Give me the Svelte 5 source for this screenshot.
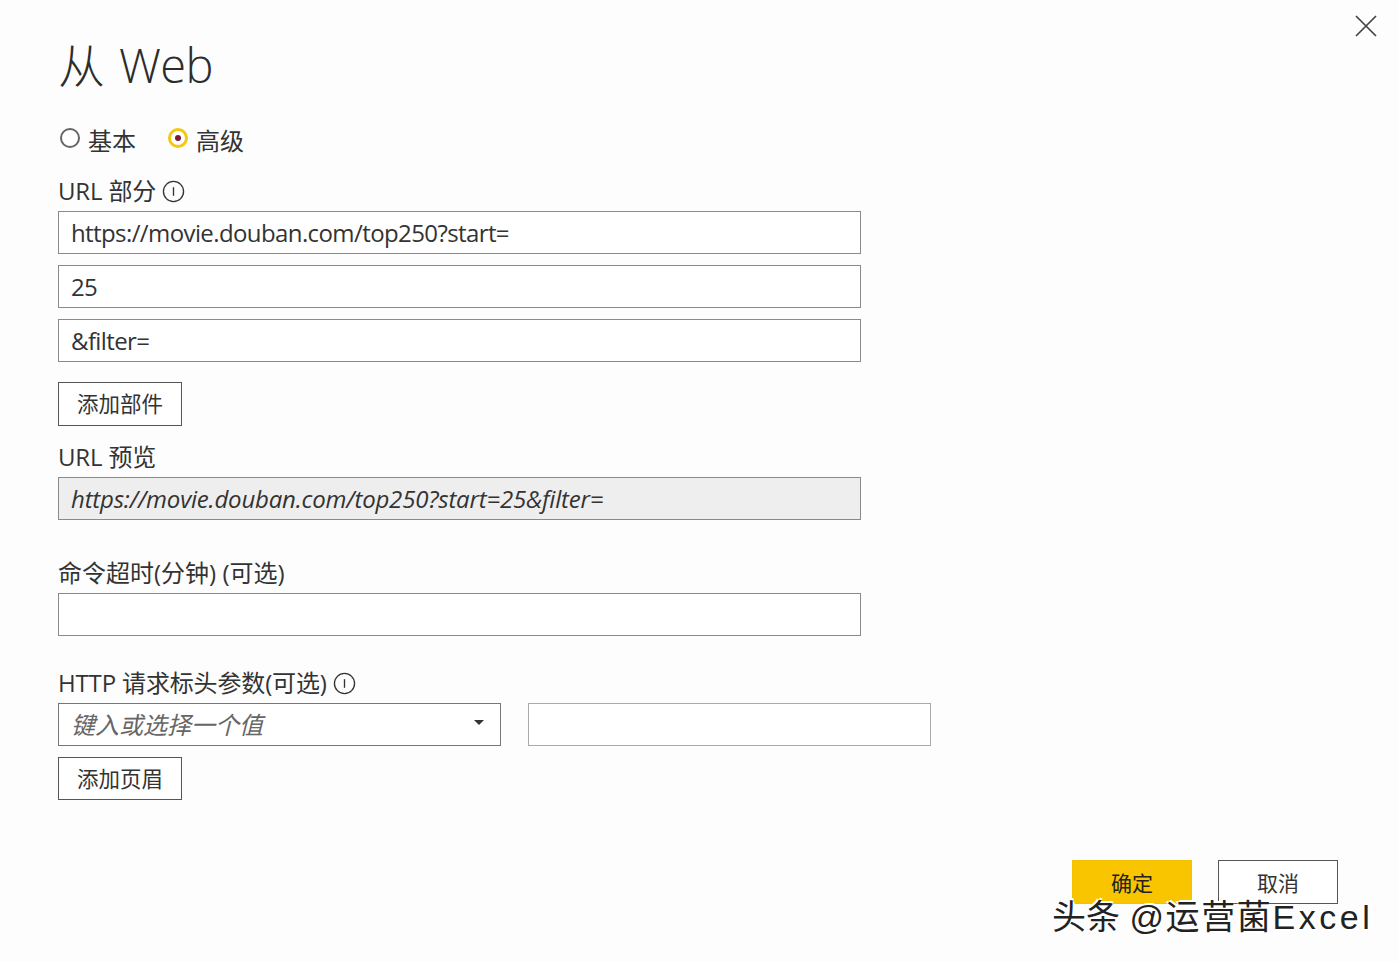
<script lang="ts">
	const urlParts = ['https://movie.douban.com/top250?start=', '25', '&filter='];
	const preview = urlParts.join('');
</script>

{#snippet info()}
	<svg class="info" viewBox="0 0 24 24" width="23" height="23" aria-hidden="true">
		<circle cx="12" cy="12" r="10.5" fill="none" stroke="#333" stroke-width="1.4" />
		<path d="M12 7.5v9" stroke="#333" stroke-width="1.4" />
	</svg>
{/snippet}

<div class="dialog">
	<button class="close" aria-label="关闭">
		<svg viewBox="0 0 24 24" width="24" height="24">
			<path d="M2 2l20 20M22 2L2 22" stroke="#444" stroke-width="1.7" fill="none" />
		</svg>
	</button>

	<h1>从 Web</h1>

	<div class="radios">
		<label class="radio"><span class="dot"></span>基本</label>
		<label class="radio"><span class="dot on"></span>高级</label>
	</div>

	<div class="label first">URL 部分 {@render info()}</div>
	<div class="parts">
		{#each urlParts as part}
			<div class="field">{part}</div>
		{/each}
	</div>
	<div class="btn add">添加部件</div>

	<div class="label preview-label">URL 预览</div>
	<div class="field preview">{preview}</div>

	<div class="label timeout-label">命令超时(分钟) (可选)</div>
	<div class="field"></div>

	<div class="label http-label">HTTP 请求标头参数(可选) {@render info()}</div>
	<div class="headers">
		<div class="field combo">
			<span class="placeholder">键入或选择一个值</span>
			<span class="caret"></span>
		</div>
		<div class="field value"></div>
	</div>
	<div class="btn add-header">添加页眉</div>

	<div class="footer">
		<div class="btn action primary">确定</div>
		<div class="btn action">取消</div>
	</div>

	<div class="watermark">头条 <span class="handle">@运营菌</span><span class="brand">Excel</span></div>
</div>

<style>
	:global(body) {
		margin: 0;
		background: #fdfdfe;
	}

	.dialog {
		position: relative;
		box-sizing: border-box;
		width: 1398px;
		height: 962px;
		padding: 32px 0 0 58px;
		overflow: hidden;
		color: #333;
		font-family: "Open Sans", "Noto Sans CJK SC", sans-serif;
		font-size: 24px;
	}

	.close {
		position: absolute;
		top: 14px;
		right: 20px;
		padding: 0;
		border: none;
		background: none;
	}

	h1 {
		margin: 0;
		height: 66px;
		font-size: 47px;
		font-weight: 300;
		line-height: 66px;
		letter-spacing: -0.6px;
		word-spacing: 3px;
		color: #2c2c2c;
	}

	.radios {
		display: flex;
		gap: 32px;
		margin-top: 26px;
		margin-left: 2px;
		height: 34px;
	}

	.radio {
		display: flex;
		align-items: center;
		gap: 8px;
		line-height: 34px;
	}

	.dot {
		position: relative;
		top: -3px;
		box-sizing: border-box;
		width: 20px;
		height: 20px;
		border: 2px solid #666;
		border-radius: 50%;
		background: #fff;
	}

	.dot.on {
		border: 3px solid #f2c811;
	}

	.dot.on::after {
		content: '';
		position: absolute;
		top: 4px;
		left: 4px;
		width: 6px;
		height: 6px;
		border-radius: 50%;
		background: #7a1a35;
	}

	.label {
		display: flex;
		align-items: center;
		gap: 6px;
		height: 34px;
		margin-bottom: 3px;
		line-height: 34px;
		letter-spacing: -0.15px;
	}

	.first {
		margin-top: 16px;
	}

	.preview-label {
		margin-top: 14px;
	}

	.timeout-label {
		margin-top: 36px;
		letter-spacing: 0;
	}

	.http-label {
		margin-top: 30px;
	}

	.parts {
		display: flex;
		flex-direction: column;
		gap: 11px;
	}

	.field {
		box-sizing: border-box;
		width: 803px;
		height: 43px;
		padding: 0 12px;
		border: 1px solid #8a8a8a;
		background: #fff;
		line-height: 41px;
		letter-spacing: -0.6px;
		white-space: pre;
	}

	.preview {
		background: #eeeeee;
		font-style: italic;
		letter-spacing: -0.2px;
	}

	.headers {
		display: flex;
		gap: 27px;
	}

	.combo {
		display: flex;
		justify-content: space-between;
		align-items: center;
		width: 443px;
		padding-right: 16px;
		border-color: #777;
		letter-spacing: 0;
	}

	.value {
		width: 403px;
		border-color: #aaa;
	}

	.placeholder {
		font-style: italic;
		color: #666;
	}

	.caret {
		margin-bottom: 4px;
		border-top: 5px solid #333;
		border-left: 5px solid transparent;
		border-right: 5px solid transparent;
	}

	.btn {
		box-sizing: border-box;
		width: 124px;
		height: 44px;
		border: 1px solid #555;
		background: #fff;
		font-size: 21.5px;
		line-height: 42px;
		text-align: center;
		color: #333;
	}

	.add {
		margin-top: 20px;
	}

	.add-header {
		height: 43px;
		margin-top: 11px;
	}

	.footer {
		position: absolute;
		top: 860px;
		left: 1072px;
		display: flex;
		gap: 26px;
	}

	.action {
		width: 120px;
		font-size: 21px;
		line-height: 44px;
	}

	.primary {
		border-color: #f2c200;
		background: #f9c400;
		color: #222;
	}

	.watermark {
		position: absolute;
		top: 892px;
		left: 1052px;
		font-family: "Liberation Sans", "Noto Sans CJK SC", sans-serif;
		font-size: 34px;
		line-height: 50px;
		white-space: nowrap;
		color: #222;
		text-shadow: 2px 2px 0 #fff, -2px -1px 0 #fff, 1px -2px 0 #fff;
	}

	.handle {
		letter-spacing: 1.6px;
	}

	.brand {
		letter-spacing: 3.6px;
	}
</style>
